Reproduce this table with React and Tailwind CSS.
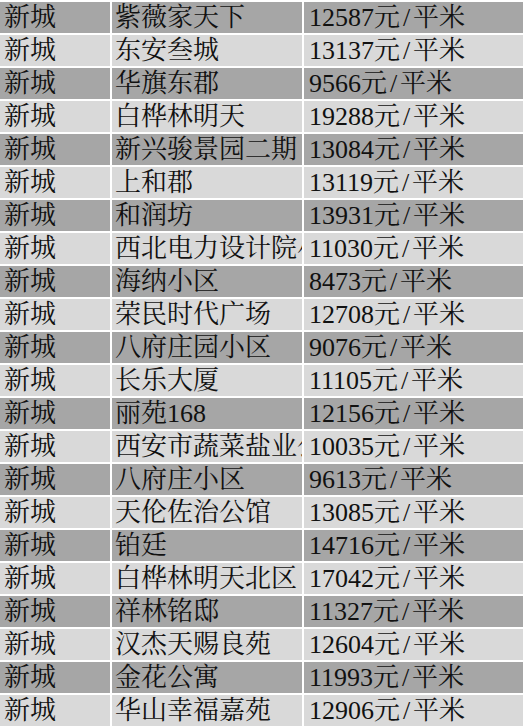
import React from 'react';

const rows = [
  ['紫薇家天下', '12587'],
  ['东安叁城', '13137'],
  ['华旗东郡', '9566'],
  ['白桦林明天', '19288'],
  ['新兴骏景园二期', '13084'],
  ['上和郡', '13119'],
  ['和润坊', '13931'],
  ['西北电力设计院小区', '11030'],
  ['海纳小区', '8473'],
  ['荣民时代广场', '12708'],
  ['八府庄园小区', '9076'],
  ['长乐大厦', '11105'],
  ['丽苑168', '12156'],
  ['西安市蔬菜盐业公司', '10035'],
  ['八府庄小区', '9613'],
  ['天伦佐治公馆', '13085'],
  ['铂廷', '14716'],
  ['白桦林明天北区', '17042'],
  ['祥林铭邸', '11327'],
  ['汉杰天赐良苑', '12604'],
  ['金花公寓', '11993'],
  ['华山幸福嘉苑', '12906'],
];

const font = {
  fontFamily: "'Liberation Serif', 'Noto Serif CJK SC', 'Noto Sans CJK SC', serif",
};

const Row = ({ name, price, dark }) => {
  const bg = dark ? 'bg-[#a6a6a6]' : 'bg-[#d9d9d9]';
  return (
    <div className="flex h-[33px] border-t-2 border-white">
      <div className={`w-[110px] shrink-0 overflow-hidden whitespace-nowrap pl-[4px] ${bg}`}>新城</div>
      <div className={`ml-[2px] w-[190px] shrink-0 overflow-hidden whitespace-nowrap pl-[3px] ${bg}`}>{name}</div>
      <div className={`ml-[2px] w-[219px] shrink-0 overflow-hidden whitespace-nowrap pl-[5px] ${bg}`}>
        {price}元<span className="inline-block w-[13px] text-center">/</span>平米
      </div>
    </div>
  );
};

export default function App() {
  return (
    <div
      className="w-[525px] h-[726px] overflow-hidden bg-white text-[26px] leading-[32px] text-[#111]"
      style={font}
    >
      {rows.map(([name, price], i) => (
        <Row key={i} name={name} price={price} dark={i % 2 === 0} />
      ))}
    </div>
  );
}
